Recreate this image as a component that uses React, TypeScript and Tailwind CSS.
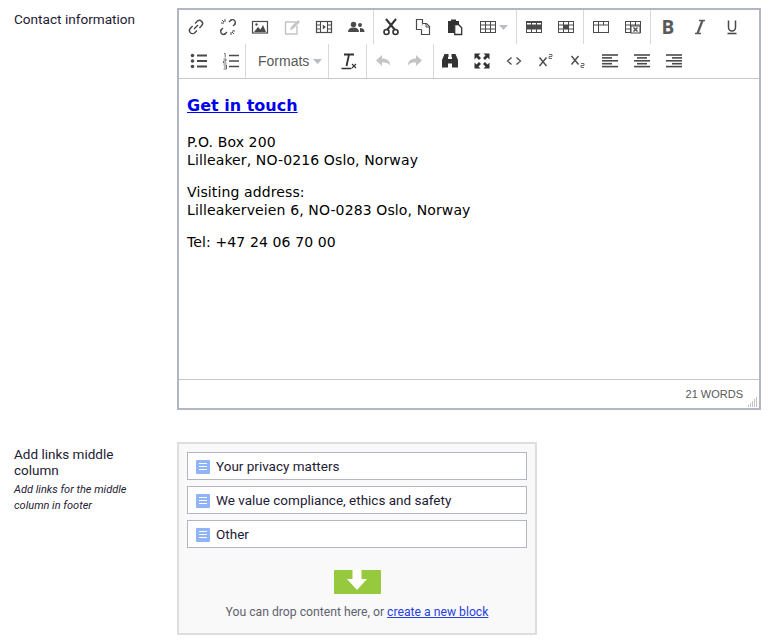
import React from 'react';

const Sep = ({ tight }: { tight?: boolean }) => <div className={`w-px self-stretch bg-[#d9d9d9] ${tight ? '-ml-0.5' : ''}`} />;

function Btn({ children, w = 'w-8' }: { children: React.ReactNode; w?: string }) {
  return <div className={`${w} h-[34px] flex items-center justify-center shrink-0`}>{children}</div>;
}

function Ico({ children, c = '#4a4a4a' }: { children: React.ReactNode; c?: string }) {
  return (
    <svg width="20" height="20" viewBox="0 0 20 20" fill="none" stroke={c} strokeWidth="1.5" className="shrink-0">
      {children}
    </svg>
  );
}

const Caret = () => (
  <svg width="9" height="5" viewBox="0 0 9 5" className="shrink-0"><path d="M0 0h9L4.5 5z" fill="#b8bcc4" /></svg>
);

const TableGrid = ({ children }: { children?: React.ReactNode }) => (
  <Ico>
    <rect x="2.5" y="4.5" width="15" height="11" strokeWidth="1" />
    <path d="M2.5 8h15M2.5 12h15M7.5 4.5v11M12.5 4.5v11" strokeWidth="1" />
    {children}
  </Ico>
);

function LinesIcon({ rows }: { rows: [number, number][] }) {
  return (
    <Ico>
      {rows.map(([a, b], i) => (
        <path key={i} d={`M${a} ${4 + i * 2.9}H${b}`} strokeWidth="1.6" />
      ))}
    </Ico>
  );
}

function Toolbar() {
  return (
    <div className="border-b border-[#c4c6cc] text-[#4a4a4a]">
      <div className="flex h-[34px] pl-px">
        <Btn>
          <Ico>
            <path d="M8 12l4-4" />
            <path d="M9 6.5l2.2-2.2a2.6 2.6 0 0 1 4.4 4.4L13.4 11" strokeWidth="1.4" />
            <path d="M11 13.5l-2.2 2.2a2.6 2.6 0 0 1-4.4-4.4L6.6 9" strokeWidth="1.4" />
          </Ico>
        </Btn>
        <Btn>
          <Ico>
            <path d="M11 5l1.5-1.5a2.6 2.6 0 0 1 4 4L15 9M9 15l-1.5 1.5a2.6 2.6 0 0 1-4-4L5 11" strokeWidth="1.4" />
            <path d="M7 2v3M3 6h3M13 18v-3M17 14h-3M4 3l2 2M16 17l-2-2M13 2v2M18 7h-2M2 13h2M7 18v-2" strokeWidth="1" />
          </Ico>
        </Btn>
        <Btn>
          <Ico>
            <rect x="2.5" y="4.5" width="15" height="11.5" strokeWidth="1.2" />
            <path d="M4 15l4-5 2.5 2.5L13 8l3 7z" fill="#4a4a4a" stroke="none" />
            <circle cx="6.5" cy="7.5" r="1.2" fill="#4a4a4a" stroke="none" />
          </Ico>
        </Btn>
        <Btn>
          <Ico c="#c4c4c4">
            <path d="M14 5H3.5v12H15V9" strokeWidth="1.4" />
            <path d="M8 13l1-3 7-7 2 2-7 7z" fill="#c4c4c4" stroke="none" />
          </Ico>
        </Btn>
        <Btn>
          <Ico>
            <rect x="2.5" y="4.5" width="15" height="11" strokeWidth="1.2" />
            <path d="M6.5 4.5v11M13.5 4.5v11M2.5 8h4M2.5 12h4M13.5 8h4M13.5 12h4" strokeWidth="1.1" />
            <path d="M8.8 7.5l3 2.5-3 2.5z" fill="#4a4a4a" stroke="none" />
          </Ico>
        </Btn>
        <Btn>
          <Ico>
            <circle cx="7.5" cy="7.5" r="2.7" fill="#4a4a4a" stroke="none" />
            <path d="M2 15c0-3 2-4.5 5.5-4.5S13 12 13 15z" fill="#4a4a4a" stroke="none" />
            <circle cx="14" cy="8" r="2" fill="#4a4a4a" stroke="none" />
            <path d="M14 15h4.500c0-2.500-1.500-4-4.500-4z" fill="#4a4a4a" stroke="none" />
          </Ico>
        </Btn>
        <div className="w-px" />
        <Sep />
        <div className="w-px" />
        <Btn>
          <Ico c="#333">
            <path d="M5 2l9 11M15 2L6 13" strokeWidth="2" />
            <circle cx="5.500" cy="15" r="2.500" strokeWidth="1.600" />
            <circle cx="14.500" cy="15" r="2.500" strokeWidth="1.600" />
          </Ico>
        </Btn>
        <Btn>
          <Ico>
            <path d="M3.500 2.500h6v10h-6z" strokeWidth="1.200" />
            <path d="M9.500 6.500h4l3 3v8h-8v-5" strokeWidth="1.200" fill="#fff" />
            <path d="M13 6.500V10h3.500" strokeWidth="1" />
          </Ico>
        </Btn>
        <Btn>
          <Ico c="#333">
            <path d="M3 4h3V2.500h5V4h3v3H9v9H3z" fill="#333" stroke="none" />
            <path d="M9.700 7.700h4l3 3v6.800h-7z" strokeWidth="1.300" fill="#fff" />
          </Ico>
        </Btn>
        <div className="h-[34px] flex items-center gap-px pl-[7px] pr-2 shrink-0">
          <TableGrid />
          <Caret />
        </div>
        <Sep />
        <div className="w-px" />
        <Btn>
          <TableGrid>
            <rect x="2.500" y="8" width="15" height="4" fill="#4a4a4a" stroke="none" />
            <path d="M2.500 4.500h15v1.500h-15z" fill="#4a4a4a" stroke="none" />
          </TableGrid>
        </Btn>
        <Btn>
          <TableGrid>
            <rect x="7.500" y="8" width="5" height="4" fill="#4a4a4a" stroke="none" />
          </TableGrid>
        </Btn>
        <div className="w-px" />
        <Sep />
        <div className="w-px" />
        <Btn>
          <Ico>
            <rect x="2.500" y="4.500" width="15" height="11" strokeWidth="1" />
            <path d="M2.500 8h15M7.500 4.500v11M12.500 4.500V8" strokeWidth="1" />
          </Ico>
        </Btn>
        <Btn>
          <TableGrid>
            <rect x="8" y="9" width="9" height="7" fill="#fff" strokeWidth="1" />
            <path d="M10.500 10.500l4 4M14.500 10.500l-4 4" strokeWidth="1.300" />
          </TableGrid>
        </Btn>
        <div className="w-px" />
        <Sep />
        <div className="w-px" />
        <Btn>
          <span className="text-[19px] leading-none font-bold text-[#5a5a5a] font-['Open_Sans',sans-serif]">B</span>
        </Btn>
        <Btn>
          <Ico c="#5a5a5a">
            <path d="M9 3.500h6M5 16.500h6" strokeWidth="1.500" />
            <path d="M12.500 3.500L7.500 16.500" strokeWidth="2.200" />
          </Ico>
        </Btn>
        <Btn>
          <Ico>
            <path d="M6.500 3.500v7a3.500 3.500 0 0 0 7 0v-7" strokeWidth="1.500" />
            <path d="M5.500 16.500h9" strokeWidth="1.600" />
          </Ico>
        </Btn>
      </div>

      <div className="flex h-[34px] pl-1">
        <Btn>
          <Ico>
            <path d="M8 4.500h10M8 10h10M8 15.500h10" strokeWidth="2" />
            <circle cx="3.500" cy="4.500" r="1.800" fill="#4a4a4a" stroke="none" />
            <circle cx="3.500" cy="10" r="1.800" fill="#4a4a4a" stroke="none" />
            <circle cx="3.500" cy="15.500" r="1.800" fill="#4a4a4a" stroke="none" />
          </Ico>
        </Btn>
        <Btn>
          <Ico>
            <path d="M8 4.500h10M8 10h10M8 15.500h10" strokeWidth="1.600" />
            <path d="M3 2.500h1.200v4M2.500 8h2.500v2H2.500v2h3M2.500 14h3v4h-3M3 16h2" strokeWidth="0.800" />
          </Ico>
        </Btn>
        <Sep tight />
        <div className="w-[64px] h-[34px] flex items-center pl-3 shrink-0 text-[14px] text-[#595959] font-['Liberation_Sans',sans-serif]">
          Formats
        </div>
        <div className="w-[18px] pl-[3px] flex items-center"><Caret /></div>
        <Sep />
        <div className="w-[37px] flex items-center justify-center">
          <Ico c="#333">
            <path d="M6 3.500h10M11 3.500L8.500 15" strokeWidth="1.800" />
            <path d="M3.500 17.500h10" strokeWidth="1.500" />
            <path d="M14 13l4 4M18 13l-4 4" strokeWidth="1.100" />
          </Ico>
        </div>
        <Sep />
        <Btn>
          <Ico c="#c4c4c4">
            <path d="M9 4v3.500c5 0 8 2 8 7-1.500-2.500-4-3-8-3V15L3 9.500z" fill="#c4c4c4" stroke="none" />
          </Ico>
        </Btn>
        <Btn>
          <Ico c="#c4c4c4">
            <path d="M11 4v3.500c-5 0-8 2-8 7 1.500-2.500 4-3 8-3V15l6-5.500z" fill="#c4c4c4" stroke="none" />
          </Ico>
        </Btn>
        <div className="w-[2px]" />
        <Sep />
        <Btn>
          <Ico c="#333">
            <path d="M4.500 3h4v3h-.5v10.500H2V9zM15.500 3h-4v3h.5v10.500h6V9z" fill="#333" stroke="none" />
            <path d="M8 8h4v4.500H8z" fill="#333" stroke="none" />
          </Ico>
        </Btn>
        <Btn>
          <Ico c="#333">
            <path d="M2.500 2.500h6l-2 2 2.500 2.500-2 2-2.500-2.500-2 2zM17.500 2.500v6l-2-2L13 9l-2-2 2.500-2.500-2-2zM2.500 17.500v-6l2 2L7 11l2 2-2.500 2.500 2 2zM17.500 17.500h-6l2-2L11 13l2-2 2.500 2.500 2-2z" fill="#333" stroke="none" />
          </Ico>
        </Btn>
        <Btn>
          <Ico>
            <path d="M7.500 6.500L3.500 10l4 3.500M12.500 6.500l4 3.500-4 3.500" strokeWidth="1.300" />
          </Ico>
        </Btn>
        <Btn>
          <Ico>
            <path d="M3.500 6.500l7 8.500M10.500 6.500l-7 8.500" strokeWidth="1.400" />
            <path d="M13 3.500h3v2h-3v2h3" strokeWidth="0.800" />
          </Ico>
        </Btn>
        <Btn>
          <Ico>
            <path d="M3.500 5l7 8.500M10.500 5l-7 8.500" strokeWidth="1.400" />
            <path d="M13 12.500h3v2h-3v2h3" strokeWidth="0.800" />
          </Ico>
        </Btn>
        <Btn>
          <LinesIcon rows={[[2, 18], [2, 12], [2, 18], [2, 12], [2, 18]]} />
        </Btn>
        <Btn>
          <LinesIcon rows={[[2, 18], [5, 15], [2, 18], [5, 15], [2, 18]]} />
        </Btn>
        <Btn>
          <LinesIcon rows={[[2, 18], [8, 18], [2, 18], [8, 18], [2, 18]]} />
        </Btn>
      </div>
    </div>
  );
}

function Editor() {
  return (
    <div className="w-[584px] h-[402px] border-2 border-[#b2b6c4] flex flex-col bg-white">
      <Toolbar />
      <div className="flex-1 px-2 pt-[15px] text-[14px] leading-[18px] tracking-[0.12px] text-black font-['DejaVu_Sans',sans-serif]">
        <a href="#" className="block text-[16px] leading-[24px] font-bold tracking-normal text-[#0000ee] underline mb-[15px]">Get in touch</a>
        <p className="mb-[14px]">P.O. Box 200<br />Lilleaker, NO-0216 Oslo, Norway</p>
        <p className="mb-[14px]">Visiting address:<br />Lilleakerveien 6, NO-0283 Oslo, Norway</p>
        <p>Tel: +47 24 06 70 00</p>
      </div>
      <div className="relative h-[29px] border-t border-[#c4c6cc] flex items-center justify-end pr-[16px] text-[11px] text-[#595959] font-['Liberation_Sans',sans-serif]">
        21 WORDS
        <svg width="10" height="10" viewBox="0 0 10 10" className="absolute right-px bottom-px">
          <path d="M8 1h1M6 3h1M8 3h1M4 5h1M6 5h1M8 5h1M2 7h1M4 7h1M6 7h1M8 7h1M0 9h1M2 9h1M4 9h1M6 9h1M8 9h1" stroke="#888" strokeWidth="1" />
        </svg>
      </div>
    </div>
  );
}

function BlockRow({ title }: { title: string }) {
  return (
    <div className="h-7 border border-[#b2b6c4] bg-white flex items-center pl-2 pt-px gap-[6px] text-[13.5px] text-[#1e2034]">
      <span className="w-[14px] h-[14px] rounded-[1px] bg-[#8fb5f8] flex flex-col justify-center gap-[2px] px-[3px] shrink-0">
        <span className="h-px bg-white" />
        <span className="h-px bg-white" />
        <span className="h-px bg-white" />
      </span>
      {title}
    </div>
  );
}

export default function App() {
  return (
    <div className="w-[771px] h-[643px] overflow-hidden bg-white font-['Roboto',sans-serif] text-[#1e2034]">
      <div className="flex pt-2 pl-[14px]">
        <div className="w-[163px] pt-[3px] text-[13.6px] leading-4">Contact information</div>
        <Editor />
      </div>
      <div className="flex pt-8 pl-[14px]">
        <div className="w-[163px] pt-[4px] pr-4">
          <div className="text-[13.5px] leading-4">Add links middle column</div>
          <div className="mt-1 text-[11px] leading-4 italic">Add links for the middle column in footer</div>
        </div>
        <div className="w-[360px] h-[193px] border-2 border-[#dedede] bg-[#f9f9f9] px-2 pt-2 flex flex-col gap-[6px]">
          <BlockRow title="Your privacy matters" />
          <BlockRow title="We value compliance, ethics and safety" />
          <BlockRow title="Other" />
          <div className="flex flex-col items-center mt-[16px]">
            <div className="w-[47px] h-6 rounded-[1px] bg-[#96c93d] flex items-start justify-center">
              <svg width="20" height="20" viewBox="0 0 20 20"><path d="M5.500 0h9v9H20l-10 11L0 9h5.500z" fill="#fff" /></svg>
            </div>
            <div className="mt-[10px] text-[12.2px] leading-4 text-[#5f6270]">
              You can drop content here, or <a href="#" className="text-[#2a3fe0] underline">create a new block</a>
            </div>
          </div>
        </div>
      </div>
    </div>
  );
}
